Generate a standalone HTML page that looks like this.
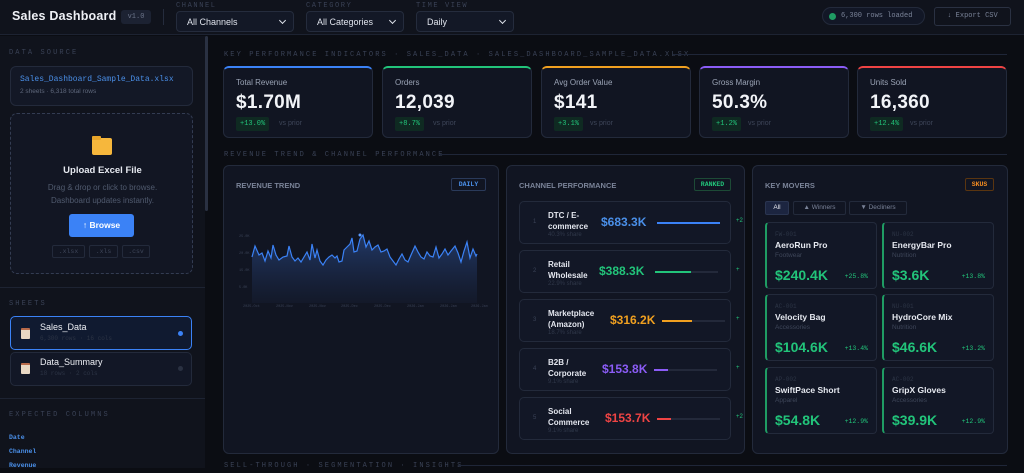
<!DOCTYPE html>
<html><head><meta charset="utf-8"><style>
*{box-sizing:border-box;margin:0;padding:0}
body{width:1024px;height:468px;overflow:hidden;background:#0b0d13;font-family:"Liberation Sans",sans-serif;color:#e6e9f0;position:relative}
.a{position:absolute}
.mono{font-family:"Liberation Mono",monospace}
.lbl{font-family:"Liberation Mono",monospace;font-size:7px;letter-spacing:2.1px;color:#3a4256;text-transform:uppercase}
.sel{position:absolute;top:11px;height:21px;background:#131826;border:1px solid #252c3d;border-radius:4px;font-size:9px;color:#dfe3ec;padding:5px 10px}
.sel:after{content:"";position:absolute;right:8px;top:6px;width:4px;height:4px;border-right:1.5px solid #dfe3ec;border-bottom:1.5px solid #dfe3ec;transform:rotate(45deg)}
.card{position:absolute;background:#111522;border:1px solid #232a3b;border-radius:6px}
.kpi{top:66px;width:150px;height:72px;border-top:2px solid}
.kpi .t{position:absolute;left:12px;top:10px;font-size:8px;color:#9aa3b5}
.kpi .v{position:absolute;left:12px;top:24px;font-size:19px;font-weight:bold;color:#f2f4f8;letter-spacing:.3px}
.kpi .d{position:absolute;left:12px;top:49px;background:#0f2a22;color:#22c47a;font-family:"Liberation Mono",monospace;font-size:7px;padding:3px 4px;border-radius:2px}
.kpi .p{position:absolute;left:55px;top:52px;font-size:7px;color:#3e4659}
.ch{position:absolute;left:519px;width:212px;height:43px;background:#121726;border:1px solid #232a3b;border-radius:5px}
.ch .n{position:absolute;left:13px;top:17px;font-size:6px;color:#3a4256}
.ch .nm{position:absolute;left:28px;top:9px;font-size:8px;color:#e3e6ee;line-height:10.5px;font-weight:bold}
.ch .sh{position:absolute;left:28px;font-size:6px;color:#30384a}
.ch .val{position:absolute;top:13px;font-size:12px;font-weight:bold}
.ch .bar{position:absolute;top:20px;height:2px;background:#23293a;width:63px}
.ch .bar i{display:block;height:2px}
.ch .g{position:absolute;left:216px;top:16px;font-size:6px;color:#22c47a}
.sku{position:absolute;width:112px;height:67px;background:#121726;border:1px solid #232a3b;border-left:2px solid #1f9c63;border-radius:4px}
.sku .c{position:absolute;left:8px;top:8px;font-family:"Liberation Mono",monospace;font-size:6px;color:#2c3445}
.sku .nm{position:absolute;left:8px;top:17px;font-size:8.5px;font-weight:bold;color:#e6e9f0}
.sku .ct{position:absolute;left:8px;top:29px;font-size:6.5px;color:#3e4659}
.sku .v{position:absolute;left:8px;top:44px;font-size:14px;font-weight:bold;color:#22c47a}
.sku .g{position:absolute;right:8px;top:50px;font-family:"Liberation Mono",monospace;font-size:6.5px;color:#22c47a}
.sheet{position:absolute;left:10px;width:182px;height:34px;background:#121726;border:1px solid #232a3b;border-radius:5px}
</style></head><body>
<div class="a" style="left:0;top:0;width:1024px;height:35px;background:#10131c;border-bottom:1px solid #1d2332"></div>
<div class="a" style="left:12px;top:9px;font-size:12.5px;font-weight:bold;color:#eef0f5;letter-spacing:.2px">Sales Dashboard</div>
<div class="a mono" style="left:121px;top:10px;width:30px;height:14px;background:#1c2232;border-radius:3px;font-size:7px;color:#6b7489;text-align:center;line-height:14px">v1.0</div>
<div class="a" style="left:163px;top:9px;width:1px;height:16px;background:#252c3d"></div>
<div class="a lbl" style="left:176px;top:2px;letter-spacing:1.6px">Channel</div>
<div class="a lbl" style="left:306px;top:2px;letter-spacing:1.6px">Category</div>
<div class="a lbl" style="left:416px;top:2px;letter-spacing:1.6px">Time View</div>
<div class="sel" style="left:176px;width:118px">All Channels</div>
<div class="sel" style="left:306px;width:98px">All Categories</div>
<div class="sel" style="left:416px;width:98px">Daily</div>
<div class="a mono" style="left:822px;top:7px;width:103px;height:18px;border:1px solid #232a3b;background:#121726;border-radius:9px;font-size:7px;color:#7a8398;padding:4px 0 0 18px">6,300 rows loaded</div>
<div class="a" style="left:829px;top:13px;width:7px;height:7px;border-radius:50%;background:#1f9c63"></div>
<div class="a mono" style="left:934px;top:7px;width:77px;height:19px;border:1px solid #2a3142;border-radius:3px;font-size:7px;color:#7a8398;text-align:center;line-height:17px">↓ Export CSV</div>

<div class="a" style="left:0;top:36px;width:205px;height:432px;background:#10131c"></div>
<div class="a" style="left:205px;top:36px;width:3px;height:175px;background:#2a3142;border-radius:2px"></div>
<div class="a lbl" style="left:9px;top:49px">Data Source</div>
<div class="card" style="left:10px;top:66px;width:183px;height:40px;background:#131826"></div>
<div class="a mono" style="left:20px;top:75px;font-size:8px;color:#4a8fe8">Sales_Dashboard_Sample_Data.xlsx</div>
<div class="a" style="left:20px;top:88px;font-size:6.5px;color:#5e677b">2 sheets · 6,318 total rows</div>
<div class="a" style="left:10px;top:113px;width:183px;height:161px;border:1px dashed #333c52;border-radius:7px;background:#121623"></div>
<div class="a" style="left:92px;top:138px;width:20px;height:17px;background:#f6b73c;border-radius:2px"></div>
<div class="a" style="left:92px;top:136px;width:9px;height:4px;background:#e8a52a;border-radius:1px"></div>
<div class="a" style="left:0;top:165px;width:205px;text-align:center;font-size:9.5px;font-weight:bold;color:#e6e9f0">Upload Excel File</div>
<div class="a" style="left:0;top:181px;width:205px;text-align:center;font-size:8px;color:#505a6e;line-height:13px">Drag &amp; drop or click to browse.<br>Dashboard updates instantly.</div>
<div class="a" style="left:69px;top:214px;width:65px;height:23px;background:#3b82f6;border-radius:3px;font-size:8.5px;font-weight:bold;color:#fff;text-align:center;line-height:23px">↑ Browse</div>
<div class="a mono" style="left:52px;top:245px;width:33px;height:13px;border:1px solid #232a3b;border-radius:2px;font-size:6.5px;color:#3e4659;text-align:center;line-height:11px">.xlsx</div>
<div class="a mono" style="left:89px;top:245px;width:29px;height:13px;border:1px solid #232a3b;border-radius:2px;font-size:6.5px;color:#3e4659;text-align:center;line-height:11px">.xls</div>
<div class="a mono" style="left:122px;top:245px;width:28px;height:13px;border:1px solid #232a3b;border-radius:2px;font-size:6.5px;color:#3e4659;text-align:center;line-height:11px">.csv</div>
<div class="a" style="left:0;top:287px;width:205px;height:1px;background:#1d2332"></div>
<div class="a lbl" style="left:9px;top:300px">Sheets</div>
<div class="sheet" style="top:316px;border-color:#3b82f6;background:#101a30"></div>
<div class="a" style="left:21px;top:328px;width:9px;height:11px;background:#e9d8c4;border-radius:1px;border-top:2px solid #b86a4a"></div>
<div class="a" style="left:40px;top:322px;font-size:9px;color:#eef0f5">Sales_Data</div>
<div class="a mono" style="left:40px;top:335px;font-size:6px;color:#2c3445">6,300 rows · 16 cols</div>
<div class="a" style="left:178px;top:331px;width:5px;height:5px;border-radius:50%;background:#3b82f6"></div>
<div class="sheet" style="top:352px"></div>
<div class="a" style="left:21px;top:363px;width:9px;height:11px;background:#e9d8c4;border-radius:1px;border-top:2px solid #b86a4a"></div>
<div class="a" style="left:40px;top:357px;font-size:9px;color:#eef0f5">Data_Summary</div>
<div class="a mono" style="left:40px;top:370px;font-size:6px;color:#2c3445">18 rows · 2 cols</div>
<div class="a" style="left:178px;top:366px;width:5px;height:5px;border-radius:50%;background:#2a3142"></div>
<div class="a" style="left:0;top:398px;width:205px;height:1px;background:#1d2332"></div>
<div class="a lbl" style="left:9px;top:411px">Expected Columns</div>
<div class="a mono" style="left:9px;top:431px;font-size:6.5px;color:#4a8fe8;font-weight:bold;line-height:14px">Date<br>Channel<br>Revenue</div>

<div class="a lbl" style="left:224px;top:51px">Key Performance Indicators · Sales_Data · Sales_Dashboard_Sample_Data.xlsx</div>
<div class="a" style="left:673px;top:54px;width:334px;height:1px;background:#1f2638"></div>
<div class="card kpi" style="left:223px;border-top-color:#3b82f6"><div class="t">Total Revenue</div><div class="v">$1.70M</div><div class="d">+13.0%</div><div class="p">vs prior</div></div>
<div class="card kpi" style="left:382px;border-top-color:#22c47a"><div class="t">Orders</div><div class="v">12,039</div><div class="d">+8.7%</div><div class="p" style="left:50px">vs prior</div></div>
<div class="card kpi" style="left:541px;border-top-color:#f0a020"><div class="t">Avg Order Value</div><div class="v">$141</div><div class="d">+3.1%</div><div class="p" style="left:48px">vs prior</div></div>
<div class="card kpi" style="left:699px;border-top-color:#8b5cf6"><div class="t">Gross Margin</div><div class="v">50.3%</div><div class="d">+1.2%</div><div class="p" style="left:48px">vs prior</div></div>
<div class="card kpi" style="left:857px;border-top-color:#ef4444"><div class="t">Units Sold</div><div class="v">16,360</div><div class="d">+12.4%</div><div class="p" style="left:52px">vs prior</div></div>
<div class="a lbl" style="left:224px;top:151px">Revenue Trend &amp; Channel Performance</div>
<div class="a" style="left:440px;top:154px;width:567px;height:1px;background:#1f2638"></div>

<div class="card" style="left:223px;top:165px;width:276px;height:289px"></div>
<div class="a" style="left:236px;top:181px;font-size:7.5px;font-weight:bold;color:#7a8398">REVENUE TREND</div>
<div class="a mono" style="left:451px;top:178px;width:35px;height:13px;border:1px solid #2a3a5a;border-radius:2px;font-size:6.5px;font-weight:bold;color:#4a8fe8;text-align:center;line-height:11px">DAILY</div>
<svg class="a" style="left:223px;top:165px" width="276" height="160">
<defs><linearGradient id="gr" x1="0" y1="0" x2="0" y2="1"><stop offset="0" stop-color="#3b6fd0" stop-opacity=".4"/><stop offset="1" stop-color="#1a2540" stop-opacity=".25"/></linearGradient></defs>
<g font-family="Liberation Mono" font-size="3.5" fill="#3a4256"><text x="16" y="72">25.0K</text><text x="16" y="89">20.0K</text><text x="16" y="106">15.0K</text><text x="16" y="123">5.0K</text>
<text x="20" y="142">2025-Oct</text><text x="53" y="142">2025-Nov</text><text x="86" y="142">2025-Nov</text><text x="118" y="142">2025-Dec</text><text x="151" y="142">2025-Dec</text><text x="184" y="142">2026-Jan</text><text x="217" y="142">2026-Jan</text><text x="248" y="142">2026-Jan</text></g>
<path fill="url(#gr)" d="M29,92 L32,81 L36,90 L39,88 L42,96 L45,86 L48,93 L50,80 L53,90 L56,95 L60,92 L64,91 L66,81 L69,92 L72,96 L75,93 L78,97 L81,92 L84,87 L87,95 L89,79 L92,93 L94,85 L97,96 L100,100 L103,95 L106,92 L109,90 L112,93 L114,91 L116,97 L119,96 L121,85 L124,82 L127,79 L129,73 L131,87 L134,86 L137,74 L140,70 L143,82 L146,76 L149,85 L152,82 L155,80 L158,87 L161,86 L164,84 L167,92 L170,96 L173,100 L176,94 L179,89 L182,95 L185,97 L188,90 L192,81 L195,87 L198,92 L201,94 L204,87 L207,91 L210,92 L213,82 L216,93 L219,89 L222,84 L225,90 L228,86 L232,81 L235,88 L238,97 L241,86 L244,77 L247,93 L250,84 L253,91 L254,89 L254,138 L29,138 Z"/>
<polyline fill="none" stroke="#3b82f6" stroke-width="1.2" points="29,92 32,81 36,90 39,88 42,96 45,86 48,93 50,80 53,90 56,95 60,92 64,91 66,81 69,92 72,96 75,93 78,97 81,92 84,87 87,95 89,79 92,93 94,85 97,96 100,100 103,95 106,92 109,90 112,93 114,91 116,97 119,96 121,85 124,82 127,79 129,73 131,87 134,86 137,74 140,70 143,82 146,76 149,85 152,82 155,80 158,87 161,86 164,84 167,92 170,96 173,100 176,94 179,89 182,95 185,97 188,90 192,81 195,87 198,92 201,94 204,87 207,91 210,92 213,82 216,93 219,89 222,84 225,90 228,86 232,81 235,88 238,97 241,86 244,77 247,93 250,84 253,91 254,89"/>
<circle cx="137" cy="70" r="1.5" fill="#5b9bff"/>
</svg>

<div class="card" style="left:506px;top:165px;width:239px;height:289px"></div>
<div class="a" style="left:519px;top:181px;font-size:7.5px;font-weight:bold;color:#7a8398">CHANNEL PERFORMANCE</div>
<div class="a mono" style="left:694px;top:178px;width:37px;height:13px;border:1px solid #1d4a36;border-radius:2px;font-size:6.5px;font-weight:bold;color:#22c47a;text-align:center;line-height:11px">RANKED</div>
<div class="ch" style="top:201px"><div class="n">1</div><div class="nm">DTC / E-<br>commerce</div><div class="sh" style="top:30px">40.3% share</div><div class="val" style="left:81px;color:#4a8fe8">$683.3K</div><div class="bar" style="left:137px"><i style="width:100%;background:#3b82f6"></i></div><div class="g">+2</div></div>
<div class="ch" style="top:250px"><div class="n">2</div><div class="nm">Retail<br>Wholesale</div><div class="sh" style="top:30px">22.9% share</div><div class="val" style="left:79px;color:#22c47a">$388.3K</div><div class="bar" style="left:135px"><i style="width:57%;background:#22c47a"></i></div><div class="g">+</div></div>
<div class="ch" style="top:299px"><div class="n">3</div><div class="nm">Marketplace<br>(Amazon)</div><div class="sh" style="top:30px">18.7% share</div><div class="val" style="left:90px;color:#f0a020">$316.2K</div><div class="bar" style="left:142px"><i style="width:47%;background:#f0a020"></i></div><div class="g">+</div></div>
<div class="ch" style="top:348px"><div class="n">4</div><div class="nm">B2B /<br>Corporate</div><div class="sh" style="top:30px">9.1% share</div><div class="val" style="left:82px;color:#8b5cf6">$153.8K</div><div class="bar" style="left:134px"><i style="width:23%;background:#8b5cf6"></i></div><div class="g">+</div></div>
<div class="ch" style="top:397px"><div class="n">5</div><div class="nm">Social<br>Commerce</div><div class="sh" style="top:30px">9.1% share</div><div class="val" style="left:85px;color:#ef4444">$153.7K</div><div class="bar" style="left:137px"><i style="width:23%;background:#ef4444"></i></div><div class="g">+2</div></div>

<div class="card" style="left:752px;top:165px;width:256px;height:289px"></div>
<div class="a" style="left:765px;top:181px;font-size:7.5px;font-weight:bold;color:#7a8398">KEY MOVERS</div>
<div class="a mono" style="left:965px;top:178px;width:29px;height:13px;border:1px solid #5a3510;border-radius:2px;font-size:6.5px;font-weight:bold;color:#f08a20;text-align:center;line-height:11px">SKUS</div>
<div class="a" style="left:765px;top:201px;width:24px;height:14px;background:#1c2540;border:1px solid #2a3550;border-radius:2px;font-size:6.5px;color:#e6e9f0;text-align:center;line-height:12px">All</div>
<div class="a" style="left:793px;top:201px;width:53px;height:14px;border:1px solid #232a3b;border-radius:2px;font-size:6.5px;color:#7a8398;text-align:center;line-height:12px">▲ Winners</div>
<div class="a" style="left:849px;top:201px;width:58px;height:14px;border:1px solid #232a3b;border-radius:2px;font-size:6.5px;color:#7a8398;text-align:center;line-height:12px">▼ Decliners</div>
<div class="sku" style="left:765px;top:222px"><div class="c">FW-001</div><div class="nm">AeroRun Pro</div><div class="ct">Footwear</div><div class="v">$240.4K</div><div class="g">+25.8%</div></div>
<div class="sku" style="left:882px;top:222px"><div class="c">NU-002</div><div class="nm">EnergyBar Pro</div><div class="ct">Nutrition</div><div class="v">$3.6K</div><div class="g">+13.8%</div></div>
<div class="sku" style="left:765px;top:294px"><div class="c">AC-001</div><div class="nm">Velocity Bag</div><div class="ct">Accessories</div><div class="v">$104.6K</div><div class="g">+13.4%</div></div>
<div class="sku" style="left:882px;top:294px"><div class="c">NU-001</div><div class="nm">HydroCore Mix</div><div class="ct">Nutrition</div><div class="v">$46.6K</div><div class="g">+13.2%</div></div>
<div class="sku" style="left:765px;top:367px"><div class="c">AP-002</div><div class="nm">SwiftPace Short</div><div class="ct">Apparel</div><div class="v">$54.8K</div><div class="g">+12.9%</div></div>
<div class="sku" style="left:882px;top:367px"><div class="c">AC-002</div><div class="nm">GripX Gloves</div><div class="ct">Accessories</div><div class="v">$39.9K</div><div class="g">+12.9%</div></div>

<div class="a lbl" style="left:224px;top:462px">Sell-Through · Segmentation · Insights</div>
<div class="a" style="left:458px;top:465px;width:549px;height:1px;background:#1f2638"></div>
</body></html>
